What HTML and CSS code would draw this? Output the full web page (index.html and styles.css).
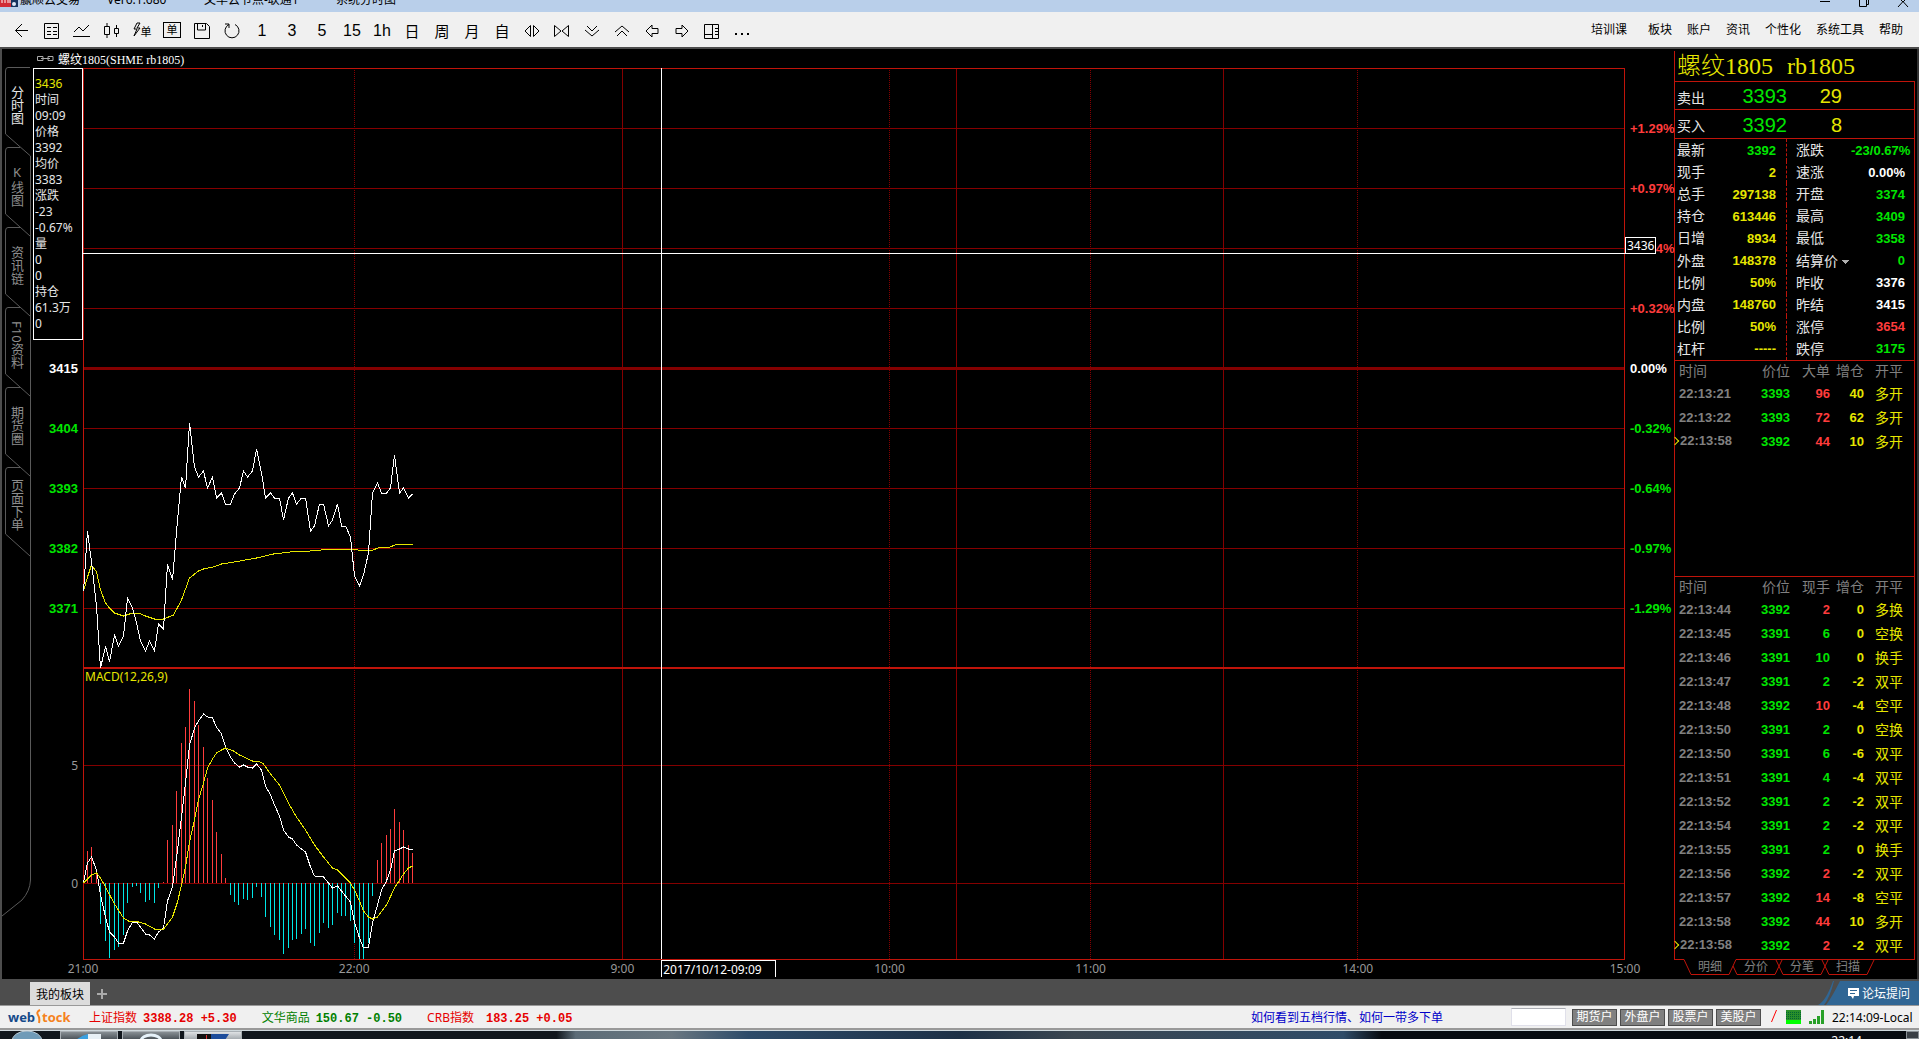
FILE: index.html
```
<!DOCTYPE html>
<html lang="zh-CN">
	<head>
		<meta charset="utf-8">
		<title>赢顺云交易</title>
		<link rel="stylesheet" href="styles.css">
	</head>
	<body>
		<!-- 标题栏 -->
		<header class="titleBar">
			<svg class="appIcon" width="18" height="12" viewBox="0 0 18 12">
				<rect width="11" height="7" fill="#d22b35"/>
				<rect x="11" width="7" height="7" fill="#16335f"/>
				<path d="M2 0v3M5 0v3M8 0v3M10 0v3" stroke="#fff"/>
				<circle cx="14" cy="4" r="2" fill="#dfe9f7"/>
			</svg>
			<span class="appName">赢顺云交易</span>
			<span class="version">Ver6.1.680</span>
			<span class="node">文华云节点-联通1</span>
			<span>系统分时图</span>
			<div class="winBtns">
				<button aria-label="最小化"><svg width="12" height="12"><path d="M1 1.500h10" stroke="#000"/></svg></button>
				<button aria-label="还原"><svg width="12" height="12"><path d="M1.500 0v6.500h7V0M8.500 4.500h2V0" fill="none" stroke="#000"/></svg></button>
				<button aria-label="关闭"><svg width="12" height="12"><path d="M1 7L6 1.500 11 7M4 0l2 2 2-2" fill="none" stroke="#000"/></svg></button>
			</div>
		</header>

		<!-- 工具栏 -->
		<div class="toolBar">
			<div class="tools">
				<button aria-label="后退"><svg width="18" height="18"><path d="M15 8.500H2.500M9 2L2.500 8.500 9 15"/></svg></button>
				<button aria-label="报价"><svg width="18" height="18"><path d="M1.500 1.500h14v15h-14zM4 5.500h4M10 5.500h4M4 9.500h4M10 9.500h4M4 12.500h4M10 12.500h4"/></svg></button>
				<button aria-label="分时"><svg width="18" height="18"><path d="M0 14.500h17M1 10l5-5 4 4 6-6"/></svg></button>
				<button aria-label="K线"><svg width="18" height="18"><path d="M1.500 4.500h5v8h-5zM4 1v3M4 13v3M11.500 6.500h4v5h-4zM13.500 3v3M13.500 12v3"/></svg></button>
				<button class="glyph small" aria-label="闪电下单"><svg width="8" height="18"><path d="M4 1L1 7h3L1 14l6-8H4l3-5z"/></svg>单</button>
				<button class="boxed">单</button>
				<button aria-label="保存"><svg width="18" height="18"><path d="M1.500 1.500h12l3 3v12h-15zM4.500 2v6h8V2M9.500 3v2"/></svg></button>
				<button aria-label="刷新"><svg width="18" height="18"><path d="M6 2.500A7 7 0 1 0 12 2.500M6 6V2H2"/></svg></button>
				<button class="glyph">1</button>
				<button class="glyph">3</button>
				<button class="glyph">5</button>
				<button class="glyph">15</button>
				<button class="glyph">1h</button>
				<button class="glyph cn">日</button>
				<button class="glyph cn">周</button>
				<button class="glyph cn">月</button>
				<button class="glyph cn">自</button>
				<button aria-label="放大"><svg width="18" height="18"><path d="M7.500 3.500v11L2 9zM10.500 3.500v11L16 9z"/></svg></button>
				<button aria-label="缩小"><svg width="18" height="18"><path d="M1.500 3.500v11L8 9zM15.500 3.500v11L9 9z"/></svg></button>
				<button aria-label="向下"><svg width="18" height="18"><path d="M4 4l5 5 5-5M2 8l7 6 7-6"/></svg></button>
				<button aria-label="向上"><svg width="18" height="18"><path d="M2 10l7-6 7 6M4 14l5-5 5 5"/></svg></button>
				<button aria-label="向左"><svg width="18" height="18"><path d="M9 3L3 9l6 6v-3.500h6v-5H9z"/></svg></button>
				<button aria-label="向右"><svg width="18" height="18"><path d="M9 3l6 6-6 6v-3.500H3v-5h6z"/></svg></button>
				<button aria-label="布局"><svg width="18" height="18"><path d="M1.500 2.500h14v14h-14zM9.500 2.500v14M1.500 12.500h8M12 6.500h3M12 9.500h3M12 12.500h3"/></svg></button>
				<button aria-label="更多"><svg width="18" height="18"><path d="M2 12h2M8 12h2M14 12h2" stroke-width="2"/></svg></button>
			</div>
			<nav class="menu">
				<button class="course">培训课</button>
				<button>板块</button>
				<button>账户</button>
				<button>资讯</button>
				<button>个性化</button>
				<button>系统工具</button>
				<button>帮助</button>
			</nav>
		</div>

		<main class="main">
			<!-- 左侧页签 -->
			<nav class="sideTabs">
				<svg class="sideLine" width="31" height="920" viewBox="0 0 31 920" fill="none" stroke="#5a5a5a">
					<path d="M30 18.500H8Q5.500 18.500 5.500 22V85L30.500 107V831Q30 842 22 851L2 867"/>
					<path d="M20 98.500H8Q5.500 98.500 5.500 102V165L30 187"/>
					<path d="M20 178.500H8Q5.500 178.500 5.500 182V245L30 267"/>
					<path d="M20 258.500H8Q5.500 258.500 5.500 262V325L30 347"/>
					<path d="M20 338.500H8Q5.500 338.500 5.500 342V405L30 427"/>
					<path d="M20 418.500H8Q5.500 418.500 5.500 422V485L30 507"/>
				</svg>
				<div class="sideList">
					<button class="active">分时图</button>
					<button class="upright">K线图</button>
					<button>资讯链</button>
					<button>F10资料</button>
					<button>期货圈</button>
					<button>页面下单</button>
				</div>
			</nav>

			<!-- 分时图 -->
			<section class="chart">
				<h1 class="chartTitle">
					<svg width="17" height="8" fill="none" stroke="#aaa"><path d="M6 1.500H.500v4H6zM11 1.500h5v4h-5zM4 3.500h9"/></svg>
					螺纹1805(SHME rb1805)
				</h1>
				<div class="plot">
					<div class="axisLeft">
						<div class="priceScale">
							<span></span><span></span><span></span><span></span>
							<span class="white">3415</span>
							<span class="green">3404</span>
							<span class="green">3393</span>
							<span class="green">3382</span>
							<span class="green">3371</span>
						</div>
						<div class="macdScale"><span>5</span><span>0</span></div>
					</div>
					<div class="canvas">
						<svg class="lines" viewBox="83 68 1542 892" preserveAspectRatio="none">
							<path class="grid" d="M83 128.500H1624M83 188.500H1624M83 248.500H1624M83 308.500H1624M83 428.500H1624M83 488.500H1624M83 548.500H1624M83 608.500H1624M83 765.500H1624M83 883.500H1624M622.500 68V959M956.500 68V959M1223.500 68V959"/>
							<path class="grid dotted" d="M354.500 68V959M889.500 68V959M1090.500 68V959M1357.500 68V959"/>
							<path class="zero" d="M83 368.500H1624"/>
							<path class="frame" d="M83.500 68.500H1624.500V959.500H83.500z"/>
							<path class="frame thick" d="M83 668H1624"/>
							<polyline class="avg" points="83.5,591 87.5,577 91.5,565 96.5,572 100.5,590 105.5,603 109.5,608 114.5,613 123.5,616 132.5,613 138.5,613 145.5,616 154.5,619 163.5,619 173.5,615 181.5,600 189.5,578 198.5,571 203.5,569 213.5,567 221.5,564 240,561 256.5,558 273.5,554 290,552 310,551 333,549 353,549 358,550 373,550 378,548 390,547 395,545 403,544 412.5,544"/>
							<polyline class="price" points="83.5,591.5 87.5,531 92.5,570 96.5,606 100.5,668 105.5,646.5 109.5,662 114.5,635 118.5,646 123.5,636 127.5,598 132.5,608 136.5,623 140.5,641 145.5,651 149.5,641 154.5,651 158.5,624 163.5,629 167.5,564 172.5,580 177.5,520 181.5,477 185.5,488 189.5,423 194.5,467 198.5,477 203.5,471 207.5,488 212.5,477 216.5,498 221.5,493 225.5,504 230.5,504 234.5,494 239.5,488 243.5,471 247.5,477 252.5,471 256.5,449 261.5,473 265.5,498 270.5,493 274.5,498 279.5,498 283.5,520 288.5,498 292.5,493 296.5,504 301.5,498 305.5,498 310.5,531 314.5,526 319.5,504 323.5,504 328.5,526 332.5,520 337.5,504 341.5,526 345.5,526 350.5,537 354.5,576 359.5,586 363.5,575 368.5,553 372.5,493 377.5,483 381.5,493 386.5,493 390.5,488 394.5,455 399.5,493 403.5,488 408.5,498 412.5,494"/>
							<!-- MACD 柱 -->
							<path class="barUp" d="M87.5 883V851M91.5 883V847M96.5 883V874M163.5 883V882M167.5 883V840M172.5 883V825M176.5 883V791M181.5 883V743M185.5 883V727M189.5 883V689M194.5 883V701M198.5 883V725M203.5 883V747M207.5 883V778M212.5 883V800M216.5 883V832M221.5 883V854M225.5 883V878M377.5 883V860M381.5 883V843M386.5 883V835M390.5 883V829M394.5 883V809M399.5 883V822M403.5 883V830M408.5 883V845M412.5 883V853"/>
							<path class="barDown" d="M100.5 883V924M105.5 883V941M109.5 883V958M114.5 883V950M118.5 883V947M123.5 883V935M127.5 883V903M132.5 883V887M136.5 883V886M140.5 883V893M145.5 883V902M149.5 883V900M154.5 883V903M158.5 883V888M230.5 883V895M234.5 883V902M238.5 883V905M243.5 883V899M247.5 883V900M252.5 883V898M256.5 883V887M261.5 883V897M265.5 883V917M270.5 883V927M274.5 883V935M279.5 883V940M283.5 883V954M288.5 883V948M292.5 883V940M296.5 883V939M301.5 883V934M305.5 883V929M310.5 883V943M314.5 883V946M319.5 883V933M323.5 883V923M328.5 883V928M332.5 883V925M337.5 883V913M341.5 883V916M345.5 883V916M350.5 883V921M354.5 883V943M359.5 883V959M363.5 883V959M368.5 883V943M372.5 883V896"/>
							<polyline class="price" points="83.5,883 87.5,863 91.5,857 96.5,870 100.5,895 105.5,917 109.5,932 114.5,937 118.5,943 123.5,943 127.5,931 132.5,922 136.5,922 140.5,927 145.5,934 149.5,935 154.5,939 158.5,932 163.5,928 167.5,901 172.5,887 177.5,850 181.5,817 185.5,783 189.5,745 194.5,728 198.5,721 203.5,714 207.5,717 212.5,718 216.5,727 221.5,734 225.5,747 230.5,757 234.5,763 239.5,767 243.5,765 247.5,767 252.5,768 256.5,764 261.5,770 265.5,786 270.5,795 274.5,805 279.5,816 283.5,830 288.5,837 292.5,839 296.5,845 301.5,849 305.5,852 310.5,867 314.5,876 323.5,877 328.5,883 332.5,888 337.5,886 341.5,891 345.5,896 350.5,902 354.5,922 359.5,938 363.5,948 368.5,947 372.5,923 377.5,905 381.5,890 386.5,881 390.5,870 394.5,851 399.5,849 403.5,847 408.5,849 412.5,849"/>
							<polyline class="avg" points="83.5,883 91.5,875 96.5,873 100.5,878 105.5,887 114.5,904 123.5,918 128.5,921 138.5,922 145.5,924 154.5,929 158.5,930 163.5,929 167.5,924 172.5,917 177.5,902 181.5,885 185.5,867 189.5,842 194.5,820 198.5,800 203.5,783 207.5,768 212.5,759 216.5,753 221.5,750 225.5,748 233.5,751 239.5,755 252.5,761 258.5,761 263.5,764 270.5,774 279.5,785 288.5,803 296.5,817 305.5,830 314.5,845 323.5,857 332.5,868 337.5,870 350.5,883 354.5,890 359.5,901 363.5,911 368.5,917 372.5,919 377.5,917 386.5,905 394.5,888 403.5,874 408.5,868 412.5,866"/>
							<path class="cross" d="M83 253.500H1625M661.500 68V959"/>
						</svg>
						<span class="macdName">MACD(12,26,9)</span>
						<span class="crossPrice">3436</span>
						<span class="crossTime">2017/10/12-09:09</span>
					</div>
					<div class="axisRight">
						<div class="priceScale">
							<span class="red">+1.29%</span>
							<span class="red">+0.97%</span>
							<span class="red">+0.64%</span>
							<span class="red">+0.32%</span>
							<span class="white">0.00%</span>
							<span class="green">-0.32%</span>
							<span class="green">-0.64%</span>
							<span class="green">-0.97%</span>
							<span class="green">-1.29%</span>
						</div>
					</div>
					<div class="timeScale">
						<span>21:00</span><span>22:00</span><span>9:00</span><span>10:00</span><span>11:00</span><span>14:00</span><span>15:00</span>
					</div>
					<!-- 十字光标数据框 -->
					<div class="tip">
						<p class="yellow">3436</p>
						<p>时间</p><p>09:09</p>
						<p>价格</p><p>3392</p>
						<p>均价</p><p>3383</p>
						<p>涨跌</p><p>-23</p><p>-0.67%</p>
						<p>量</p><p>0</p><p>0</p>
						<p>持仓</p><p>61.3万</p><p>0</p>
					</div>
				</div>
			</section>

			<!-- 右侧盘口 -->
			<aside class="panel">
				<h2 class="contract"><span>螺纹1805</span><span>rb1805</span></h2>
				<div class="bid"><span>卖出</span><b class="green">3393</b><b class="yellow">29</b></div>
				<div class="bid"><span>买入</span><b class="green">3392</b><b class="yellow">8</b></div>
				<table class="quote">
					<tr><th>最新</th><td class="green">3392</td><th>涨跌</th><td class="green">-23/0.67%</td></tr>
					<tr><th>现手</th><td class="yellow">2</td><th>速涨</th><td class="white">0.00%</td></tr>
					<tr><th>总手</th><td class="yellow">297138</td><th>开盘</th><td class="green">3374</td></tr>
					<tr><th>持仓</th><td class="yellow">613446</td><th>最高</th><td class="green">3409</td></tr>
					<tr><th>日增</th><td class="yellow">8934</td><th>最低</th><td class="green">3358</td></tr>
					<tr><th>外盘</th><td class="yellow">148378</td><th><select class="settle" aria-label="结算价"><option>结算价</option></select></th><td class="green">0</td></tr>
					<tr><th>比例</th><td class="yellow">50%</td><th>昨收</th><td class="white">3376</td></tr>
					<tr><th>内盘</th><td class="yellow">148760</td><th>昨结</th><td class="white">3415</td></tr>
					<tr><th>比例</th><td class="yellow">50%</td><th>涨停</th><td class="red">3654</td></tr>
					<tr><th>杠杆</th><td class="yellow">-----</td><th>跌停</th><td class="green">3175</td></tr>
				</table>
				<div class="ticks bigTicks">
					<table>
						<tr><th>时间</th><th>价位</th><th>大单</th><th>增仓</th><th>开平</th></tr>
						<tr><td>22:13:21</td><td>3393</td><td class="red">96</td><td>40</td><td>多开</td></tr>
						<tr><td>22:13:22</td><td>3393</td><td class="red">72</td><td>62</td><td>多开</td></tr>
						<tr class="last"><td>22:13:58</td><td>3392</td><td class="red">44</td><td>10</td><td>多开</td></tr>
					</table>
				</div>
				<div class="ticks">
					<table>
						<tr><th>时间</th><th>价位</th><th>现手</th><th>增仓</th><th>开平</th></tr>
						<tr><td>22:13:44</td><td>3392</td><td class="red">2</td><td>0</td><td>多换</td></tr>
						<tr><td>22:13:45</td><td>3391</td><td class="green">6</td><td>0</td><td>空换</td></tr>
						<tr><td>22:13:46</td><td>3391</td><td class="green">10</td><td>0</td><td>换手</td></tr>
						<tr><td>22:13:47</td><td>3391</td><td class="green">2</td><td>-2</td><td>双平</td></tr>
						<tr><td>22:13:48</td><td>3392</td><td class="red">10</td><td>-4</td><td>空平</td></tr>
						<tr><td>22:13:50</td><td>3391</td><td class="green">2</td><td>0</td><td>空换</td></tr>
						<tr><td>22:13:50</td><td>3391</td><td class="green">6</td><td>-6</td><td>双平</td></tr>
						<tr><td>22:13:51</td><td>3391</td><td class="green">4</td><td>-4</td><td>双平</td></tr>
						<tr><td>22:13:52</td><td>3391</td><td class="green">2</td><td>-2</td><td>双平</td></tr>
						<tr><td>22:13:54</td><td>3391</td><td class="green">2</td><td>-2</td><td>双平</td></tr>
						<tr><td>22:13:55</td><td>3391</td><td class="green">2</td><td>0</td><td>换手</td></tr>
						<tr><td>22:13:56</td><td>3392</td><td class="red">2</td><td>-2</td><td>双平</td></tr>
						<tr><td>22:13:57</td><td>3392</td><td class="red">14</td><td>-8</td><td>空平</td></tr>
						<tr><td>22:13:58</td><td>3392</td><td class="red">44</td><td>10</td><td>多开</td></tr>
						<tr class="last"><td>22:13:58</td><td>3392</td><td class="red">2</td><td>-2</td><td>双平</td></tr>
					</table>
				</div>
				<div class="panelTabs">
					<svg width="241" height="20" fill="none" stroke="#c0140a">
						<path d="M0 .5H10L17 15.500H55L62 .5H241"/>
						<path d="M59 7l4 8.500H101L108 1M102 1l7 14.500H147L154 1M148 1l7 14.500H193L200 1"/>
					</svg>
					<div class="tabList">
						<button>明细</button><button>分价</button><button>分笔</button><button>扫描</button>
					</div>
				</div>
			</aside>
		</main>

		<!-- 板块栏 -->
		<div class="blockBar">
			<button class="myBlock">我的板块</button>
			<button class="add" aria-label="添加"><svg width="12" height="12"><path d="M6 1v10M1 6h10" stroke="#aaa" stroke-width="2"/></svg></button>
			<a class="forum" href="#">
				<svg class="swoosh" width="30" height="24"><path d="M0 24Q8 20 15 0L16 0Q12 16 6 24z" fill="#306694"/><path d="M8 24Q14 16 22 0H30V24z" fill="#306694"/></svg>
				<span><svg width="11" height="12"><path d="M0 1h11v8H6L5 12 3 9H0z" fill="#fff"/><path d="M2 3.500h7M2 6.500h5" stroke="#306694"/></svg>论坛提问</span>
			</a>
		</div>

		<!-- 状态栏 -->
		<footer class="statusBar">
			<span class="logo"><span>web</span><svg width="7" height="16"><path d="M5 1Q1 3 3 6T4 14" fill="none" stroke="#f58220" stroke-width="2"/></svg><em>tock</em></span>
			<span class="index up">上证指数<b>3388.28 +5.30</b></span>
			<span class="index down">文华商品<b>150.67 -0.50</b></span>
			<span class="index up">CRB指数<b class="far">183.25 +0.05</b></span>
			<a class="notice" href="#">如何看到五档行情、如何一带多下单</a>
			<input class="code" type="text" aria-label="代码">
			<div class="accounts">
				<button>期货户</button><button>外盘户</button><button>股票户</button><button>美股户</button>
			</div>
			<svg class="state" width="54" height="16">
				<path d="M.5 13L5.500 1" stroke="#f00"/>
				<rect x="15" y="1" width="15" height="14" fill="#2a8f2a"/>
				<path d="M15 3.500h15M15 5.500h15M15 7.500h15M15 9.500h15" stroke="#063" stroke-dasharray="1 1"/>
				<rect x="15" y="11" width="15" height="4" fill="#0f0"/>
				<path d="M39.500 15v-3M43.500 15v-5M47.500 15V7M51.500 15V1" stroke="#28a028" stroke-width="3"/>
			</svg>
			<span class="clock">22:14:09-Local</span>
		</footer>

		<!-- 任务栏 -->
		<div class="taskBar">
			<svg class="start" width="60" height="8"><ellipse cx="27" cy="10" rx="15" ry="10" fill="#6f9bb8" stroke="#b9cbd6"/></svg>
			<span class="task"><svg width="26" height="8"><path d="M0 8Q6 3 12 2V8z" fill="#3aa0e0"/><path d="M12 2h13v6H12z" fill="#e8f0f5"/></svg></span>
			<span class="task"><svg width="24" height="8"><ellipse cx="12" cy="9" rx="10" ry="6" fill="none" stroke="#e6f2fa" stroke-width="3"/></svg></span>
			<span class="task on"><svg width="32" height="8"><path d="M0 2h14v6H0z" fill="#111"/><path d="M9.500 3v5" stroke="#d33"/><path d="M14 2h18l-4 6H14z" fill="#1d4d9b"/></svg></span>
			<span class="taskTime">22:14</span>
			<span class="peek"></span>
		</div>
	</body>
</html>
```
FILE: styles.css
```
* {
	margin: 0;
	padding: 0;
	box-sizing: border-box;
}
body {
	height: 100vh;
	display: flex;
	flex-direction: column;
	overflow: hidden;
	background-color: #000;
	color: #e6e6e6;
	font-family: "Noto Sans", "Noto Sans CJK SC", sans-serif;
	font-size: 12px;
}
button, select {
	border: none;
	background: none;
	color: inherit;
	font: inherit;
	white-space: nowrap;
}
a {
	text-decoration: none;
}
svg {
	display: block;
	flex: none;
}
.red {
	color: #ff3c3c;
}
.green {
	color: #00e600;
}
.yellow {
	color: #e6e600;
}
.white {
	color: #fff;
}

/* 标题栏 */
.titleBar {
	height: 12px;
	flex: none;
	display: flex;
	align-items: flex-end;
	overflow: hidden;
	background-color: #b9cfea;
	color: #000;
	line-height: 20px;
}
.titleBar > span {
	padding-bottom: 2px;
}
.appIcon {
	margin-right: 2px;
}
.appName {
	width: 87px;
}
.version {
	width: 97px;
}
.node {
	width: 132px;
}
.winBtns {
	margin-left: auto;
	margin-right: 10px;
	display: flex;
	gap: 27px;
}

/* 工具栏 */
.toolBar {
	height: 37px;
	flex: none;
	display: flex;
	justify-content: space-between;
	background-color: #f0f0f0;
	border-bottom: 2px solid #4d4d4d;
	color: #000;
}
.tools {
	display: flex;
	padding: 2px 0 0 7px;
}
.tools button {
	width: 30px;
	display: flex;
	align-items: center;
	justify-content: center;
}
.tools svg {
	fill: none;
	stroke: #000;
}
.tools .glyph {
	font-family: "Liberation Sans", "Noto Sans CJK SC", sans-serif;
	font-size: 16px;
}
.tools .cn {
	font-size: 15px;
}
.tools .small {
	font-size: 11px;
}
.tools .boxed {
	width: 18px;
	height: 16px;
	margin: 8px 6px;
	border: 1px solid #000;
	font-size: 11px;
	line-height: 12px;
}
.menu {
	display: flex;
	gap: 15px;
	padding: 0 16px 1px 0;
}
.menu .course {
	margin-right: 6px;
}

.main {
	flex: 1;
	min-height: 0;
	display: flex;
	border-left: 2px solid #4d4d4d;
	border-right: 2px solid #333;
}

/* 左侧页签 */
.sideTabs {
	width: 29px;
	display: grid;
	align-content: start;
	color: #8c8c8c;
}
.sideLine, .sideList {
	grid-area: 1 / 1;
}
.sideLine {
	margin-left: -2px;
}
.sideList {
	padding-top: 16px;
}
.sideList button {
	display: flex;
	align-items: center;
	justify-content: center;
	width: 31px;
	height: 80px;
	writing-mode: vertical-rl;
	font-size: 13px;
}
.sideList .upright {
	text-orientation: upright;
}
.sideList .active {
	color: #e6e6e6;
}

/* 分时图 */
.chart {
	flex: 1;
	min-width: 0;
	display: flex;
	flex-direction: column;
}
.chartTitle {
	height: 19px;
	display: flex;
	align-items: center;
	gap: 4px;
	padding-left: 6px;
	font: 12px "Liberation Serif", "Noto Sans CJK SC", serif;
	color: #fff;
}
.plot {
	flex: 1;
	min-height: 0;
	position: relative;
	display: grid;
	grid-template-columns: 52px 1fr 49px;
	grid-template-rows: 1fr 19px;
}
.axisLeft, .axisRight {
	display: grid;
	grid-template-rows: 600fr 292fr;
	min-height: 0;
	font: bold 13px "Liberation Sans", sans-serif;
}
.axisLeft {
	text-align: right;
	padding-right: 5px;
}
.axisRight {
	padding-left: 5px;
}
.priceScale {
	display: grid;
	grid-template-rows: 1fr repeat(9, 2fr) 1fr;
	align-items: center;
}
.macdScale {
	display: grid;
	grid-template-rows: 38fr 118fr 118fr 18fr;
	align-items: center;
	font: 12px "Noto Sans", sans-serif;
	color: #999;
}
/* 占住第一行, 让刻度对齐网格线 */
.priceScale::before, .macdScale::before {
	content: "";
}
.canvas {
	position: relative;
	min-height: 0;
}
.lines {
	width: 100%;
	height: 100%;
	fill: none;
	shape-rendering: crispEdges;
}
.lines path, .lines polyline {
	vector-effect: non-scaling-stroke;
}
.grid {
	stroke: #840000;
}
.dotted {
	stroke-dasharray: 1 1;
}
.zero {
	stroke: #840000;
	stroke-width: 3px;
}
.frame {
	stroke: #c0140a;
}
.thick {
	stroke-width: 2px;
}
.price {
	stroke: #fff;
}
.avg {
	stroke: #e6e600;
}
.barUp {
	stroke: #ff3c3c;
}
.barDown {
	stroke: #00e6e6;
}
.cross {
	stroke: #fff;
}
.macdName {
	position: absolute;
	left: 2px;
	top: 67.5%;
	line-height: 14px;
	color: #e6e600;
}
.crossPrice {
	position: absolute;
	z-index: 1;
	left: 100%;
	top: 19%;
	height: 17px;
	padding: 0 1px;
	border: 1px solid #fff;
	background-color: #000;
	color: #fff;
	line-height: 15px;
}
.crossTime {
	position: absolute;
	z-index: 1;
	left: 37.5%;
	top: 100%;
	width: 115px;
	height: 17px;
	padding-left: 1px;
	border: 1px solid #fff;
	border-bottom: none;
	background-color: #000;
	color: #fff;
	line-height: 18px;
	white-space: nowrap;
}
.timeScale {
	grid-column: 2;
	display: grid;
	grid-template-columns: 271fr 268fr 267fr 201fr 267fr 267fr 0;
	color: #999;
	line-height: 18px;
}
.timeScale span {
	width: 0;
	display: flex;
	justify-content: center;
}
.tip {
	position: absolute;
	left: 2px;
	top: 0;
	width: 50px;
	padding: 7px 1px;
	border: 1px solid #fff;
	background-color: #000;
	line-height: 16px;
}

/* 右侧盘口 */
.panel {
	width: 241px;
	margin: 2px 2px 0 0;
	display: flex;
	flex-direction: column;
}
.panel > * {
	border: 1px solid #c0140a;
	border-width: 0 1px 1px 1px;
}
.contract {
	height: 31px;
	display: flex;
	align-items: center;
	gap: 14px;
	padding-left: 2px;
	border-right: none;
	font: 24px "Liberation Serif", "Noto Sans CJK SC", serif;
	font-weight: 300;
	line-height: 28px;
	color: #e6e600;
}
.bid {
	height: 28px;
	display: grid;
	grid-template-columns: 50px 60px 55px;
	align-items: center;
	padding: 2px 0 0 2px;
	font-size: 14px;
}
.bid + .bid {
	height: 29px;
}
.bid b {
	font: 20px "Liberation Sans", sans-serif;
	text-align: right;
}
.panel table {
	border-spacing: 0;
	table-layout: fixed;
}
.panel th {
	font-weight: normal;
	font-size: 14px;
	text-align: left;
}
.panel td {
	font: bold 13px "Liberation Sans", "Noto Sans CJK SC", sans-serif;
	text-align: right;
}
.quote {
	width: 100%;
	height: 222px;
}
.quote tr {
	height: 22px;
	line-height: 20px;
}
.quote th:first-child {
	width: 44px;
	padding-left: 2px;
}
.quote td:nth-child(2) {
	width: 68px;
	padding-right: 10px;
	border-right: 1px dashed #c0140a;
}
.quote th:nth-child(3) {
	width: 64px;
	padding-left: 9px;
}
.quote td:last-child {
	padding-right: 9px;
}
.settle {
	appearance: none;
	width: 54px;
	display: block;
	background: conic-gradient(from 315deg at 50% 100%, #b0b0b0 90deg, transparent 0) right 9px / 9px 4px no-repeat;
}
.ticks {
	flex: 1;
	min-height: 0;
	border-bottom: none;
}
.ticks.bigTicks {
	flex: none;
	height: 216px;
	border-bottom: 1px solid #c0140a;
}
.ticks table {
	width: 228px;
}
.ticks tr {
	height: 24px;
	line-height: 20px;
}
.ticks tr:first-child {
	height: 20px;
	color: #808080;
}
.ticks th, .ticks td:nth-child(n+2) {
	text-align: right;
}
.ticks th:first-child {
	width: 70px;
	padding-left: 4px;
	text-align: left;
}
.ticks th:nth-child(2) {
	width: 45px;
}
.ticks th:nth-child(3) {
	width: 40px;
}
.ticks th:nth-child(4) {
	width: 34px;
}
.ticks td:first-child {
	padding-left: 4px;
	color: #808080;
	text-align: left;
}
.ticks td:nth-child(2) {
	color: #00e600;
}
.ticks td:nth-child(4) {
	color: #e6e600;
}
.ticks td:nth-child(5) {
	color: #e6e600;
	font-size: 14px;
	font-weight: normal;
}
.ticks .last td:first-child {
	padding-left: 0;
	display: flex;
	line-height: 24px;
}
.last td:first-child::before {
	content: "";
	width: 5px;
	height: 5px;
	margin: 9px 2px 0 -3px;
	border: 1px solid #e6e600;
	border-width: 1px 1px 0 0;
	transform: rotate(45deg);
}
.panelTabs {
	height: 20px;
	flex: none;
	display: grid;
	border: none;
	color: #808080;
}
.panelTabs svg, .tabList {
	grid-area: 1 / 1;
}
.tabList {
	display: flex;
	padding-left: 13px;
}
.tabList button {
	width: 46px;
	height: 16px;
	line-height: 16px;
}

/* 板块栏 */
.blockBar {
	height: 26px;
	flex: none;
	display: flex;
	align-items: flex-end;
	padding-left: 30px;
	background-color: #4d4d4d;
}
.myBlock {
	width: 60px;
	height: 23px;
	background-color: #dcdcdc;
	color: #000;
}
.add {
	padding: 5px 6px;
}
.forum {
	display: flex;
	margin-left: auto;
	color: #fff;
}
.forum span {
	display: flex;
	align-items: center;
	gap: 3px;
	padding-right: 9px;
	background-color: #306694;
}

/* 状态栏 */
.statusBar {
	height: 25px;
	flex: none;
	display: flex;
	align-items: center;
	padding: 0 6px 0 8px;
	border-top: 1px solid #999;
	border-bottom: 2px solid #999;
	background-color: #f0f0f0;
	color: #000;
}
.logo {
	width: 81px;
	display: flex;
	align-items: center;
	font: bold 13px "Open Sans", sans-serif;
	color: #154a8a;
}
.logo em {
	font-style: normal;
	color: #f58220;
}
.index {
	margin-right: 25px;
	white-space: nowrap;
}
.index b {
	margin-left: 6px;
	font: bold 12px "Liberation Mono", monospace;
}
.index .far {
	margin-left: 12px;
}
.up {
	color: #e60000;
}
.down {
	color: #008000;
}
.notice {
	margin-left: auto;
	margin-right: 68px;
	color: #0000c8;
}
.code {
	width: 55px;
	height: 18px;
	margin-right: 6px;
	border: 1px solid #e0e0ea;
	border-top-color: #abadb3;
	background-color: #fff;
}
.accounts {
	display: flex;
	gap: 3px;
	margin-right: 10px;
}
.accounts button {
	width: 45px;
	height: 17px;
	border: 1px solid #4d4d4d;
	background-color: #808080;
	color: #fff;
	line-height: 14px;
}
.state {
	margin-right: 7px;
}
.clock {
	width: 81px;
	white-space: nowrap;
}

/* 任务栏 */
.taskBar {
	height: 9px;
	flex: none;
	display: flex;
	gap: 4px;
	overflow: hidden;
	border-top: 1px solid #cfd8dc;
	background: linear-gradient(90deg, #10161c 29%, #5c6c77 30%, #6a7781 35%, #2d4b69 39%, #1d3046 50%, #3b4650 56%, #2f4c68 70%, #070b10 72%);
}
.task {
	width: 58px;
	display: flex;
	justify-content: center;
	border: 1px solid #a9b0b5;
	border-bottom: none;
	background: linear-gradient(#888f94, #4d555b);
}
.on {
	background: linear-gradient(#dfe2e4, #a5abb0);
}
.start {
	margin-right: -4px;
}
.taskTime {
	margin-left: auto;
	margin-right: 40px;
	color: #fff;
	line-height: 19px;
}
.peek {
	width: 13px;
	border: 1px solid #8a9196;
	background-color: #3a4046;
}
```
